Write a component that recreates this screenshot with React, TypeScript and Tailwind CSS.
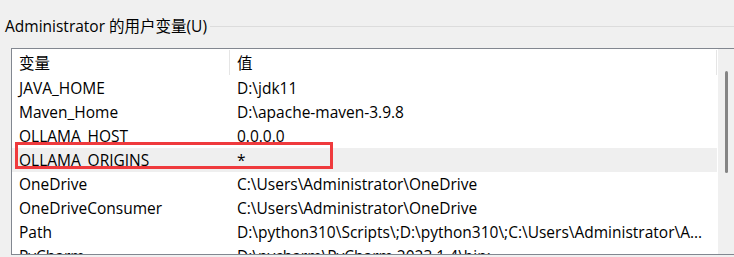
import React from "react";

const rows: [string, string][] = [
  ["JAVA_HOME", "D:\\jdk11"],
  ["Maven_Home", "D:\\apache-maven-3.9.8"],
  ["OLLAMA_HOST", "0.0.0.0"],
  ["OLLAMA_ORIGINS", "*"],
  ["OneDrive", "C:\\Users\\Administrator\\OneDrive"],
  ["OneDriveConsumer", "C:\\Users\\Administrator\\OneDrive"],
  ["Path", "D:\\python310\\Scripts\\;D:\\python310\\;C:\\Users\\Administrator\\AppData\\Local\\Microsoft\\WindowsApps;"],
  ["PyCharm", "D:\\pycharm\\PyCharm 2023.1.4\\bin;"],
];

export default function App() {
  return (
    <div className="relative w-[734px] h-[257px] overflow-hidden bg-[#f0f0f0] text-black text-[15.5px] font-['Open_Sans','Noto_Sans_CJK_SC',sans-serif]">
      <div className="flex items-center h-[20px] mt-[16px] pl-[5px]">
        <span className="whitespace-nowrap leading-[20px]">Administrator 的用户变量(U)</span>
        <div className="flex-1 h-px bg-[#dcdcdc] ml-[3px]" />
      </div>
      <div className="mt-[12px] ml-[11px] w-[725px] h-[207px] border border-[#828790] flex overflow-hidden">
        <div className="w-[706px] bg-white flex flex-col">
          <div className="flex h-[27px] shrink-0 items-center">
            <div className="w-[217px] pl-[7px] leading-[20px]">变量</div>
            <div className="w-px h-[25px] bg-[#e5e5e5]" />
            <div className="w-[486px] pl-[7px] leading-[20px]">值</div>
            <div className="w-px h-[25px] bg-[#e5e5e5]" />
          </div>
          {rows.map(([k, v], i) => (
            <div
              key={k}
              className={
                i === 3
                  ? "flex h-[24px] shrink-0 items-center w-[705px] bg-[#efefef]"
                  : "flex h-[24px] shrink-0 items-center w-[705px]"
              }
            >
              <div className="w-[218px] pl-[7px] whitespace-nowrap leading-[20px]">{k}</div>
              <div className="w-[487px] pl-[7px] pr-[8px] whitespace-nowrap overflow-hidden text-ellipsis leading-[20px]">{v}</div>
            </div>
          ))}
        </div>
        <div className="w-[17px] bg-[#f0f0f0] flex justify-center pt-[22px]">
          <div className="w-[3px] h-[102px] rounded-full bg-[#858585]" />
        </div>
      </div>
      <div className="absolute left-[15px] top-[142px] w-[318px] h-[27px] border-[3px] border-[#ef3a3d]" />
    </div>
  );
}
